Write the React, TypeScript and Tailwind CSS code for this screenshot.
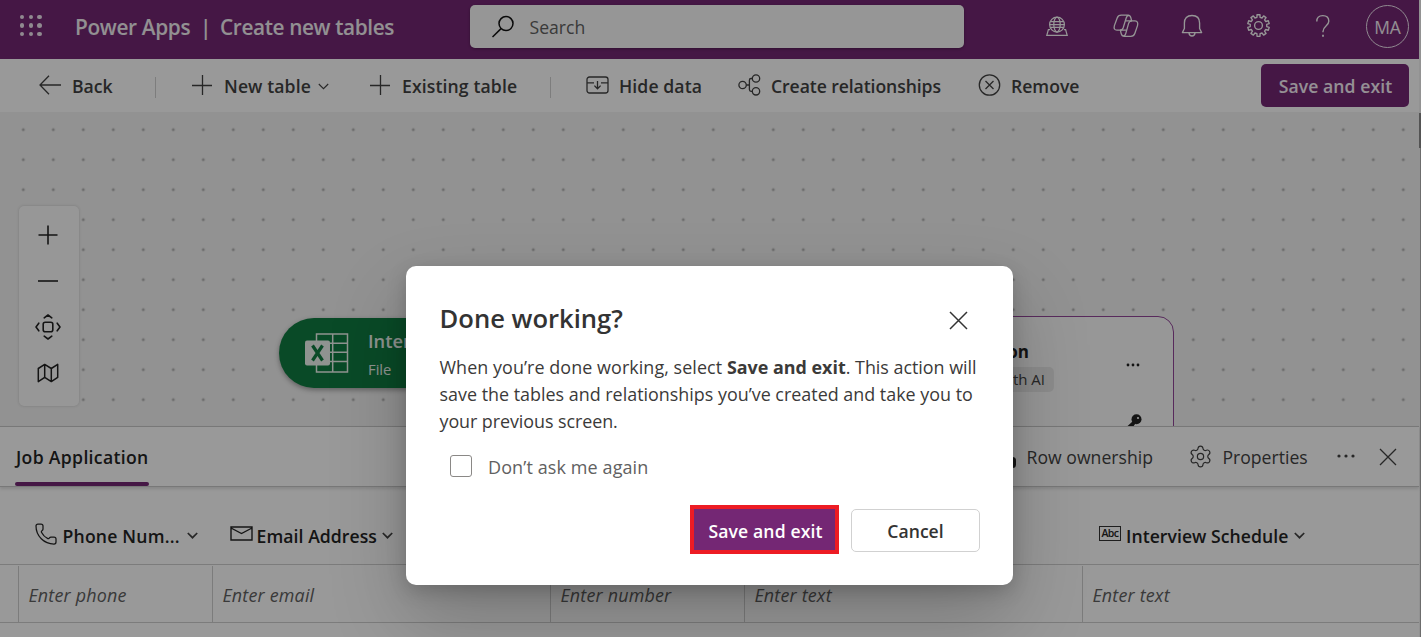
import React from "react";
import { Phone, Settings } from "lucide-react";

type IconProps = { className?: string; children: React.ReactNode; w: number; h: number; sw?: number };

function Icon({ w, h, sw = 1.3, className = "", children }: IconProps) {
  return (
    <svg
      width={w}
      height={h}
      viewBox={`0 0 ${w} ${h}`}
      fill="none"
      stroke="currentColor"
      strokeWidth={sw}
      className={`block shrink-0 ${className}`}
    >
      {children}
    </svg>
  );
}

function gearPath(c: number, outer: number, inner: number, teeth: number, offset: number) {
  const pts: string[] = [];
  const step = (Math.PI * 2) / teeth;
  for (let i = 0; i < teeth; i++) {
    const a = i * step + offset;
    const corners: [number, number][] = [
      [inner, -0.3],
      [outer, -0.22],
      [outer, 0.22],
      [inner, 0.3],
    ];
    corners.forEach(([r, f]) => {
      const t = a + f * step;
      pts.push(`${(c + r * Math.cos(t)).toFixed(2)} ${(c + r * Math.sin(t)).toFixed(2)}`);
    });
  }
  return `M${pts.join("L")}Z`;
}

const Plus = () => (
  <Icon w={20} h={20}>
    <path d="M0 10.5H20M10.5 0V20" />
  </Icon>
);

const Chevron = ({ sw = 1.5 }: { sw?: number }) => (
  <Icon w={11} h={7} sw={sw}>
    <path d="M.8 1L5.5 5.7L10.2 1" />
  </Icon>
);

const Divider = () => <div className="mt-[5px] h-[21px] w-px bg-[#d0d0d0]" />;

function Header() {
  return (
    <header className="flex h-[59px] shrink-0 items-start bg-[#742774] text-[#fafafa]">
      <div className="ml-[20px] mt-[15px] grid w-[22px] grid-cols-3 gap-x-[4.2px] gap-y-[4px]">
        {Array.from({ length: 9 }, (_, i) => (
          <span key={i} className="size-[4.4px] rounded-full bg-[#f0e6f0]" />
        ))}
      </div>
      <div className="ml-[33px] flex h-[56px] w-[395px] items-center whitespace-nowrap text-[20.8px] font-semibold text-[#f3f0f3]">
        <span className="w-[125px] tracking-[-0.33px]">Power Apps</span>
        <span className="w-[20px]">|</span>
        <span className="tracking-[-0.38px]">Create new tables</span>
      </div>
      <div className="mt-[5px] flex h-[43px] w-[494px] items-center rounded-[5px] bg-[#fafafa] shadow-[0_1px_3px_rgba(0,0,0,0.3)]">
        <Icon w={24} h={24} sw={1.5} className="ml-[21px] text-[#111]">
          <circle cx="15" cy="8.6" r="7" />
          <path d="M10 13.6L1.5 22" />
        </Icon>
        <span className="ml-[14.5px] pt-[2px] text-[17.6px] text-[#616161]">Search</span>
      </div>
      <div className="ml-[81px] flex h-[52px] items-center">
        <div className="w-[68px]">
          <Icon w={24} h={22} sw={1.25}>
            <circle cx="12" cy="9.6" r="7.4" />
            <ellipse cx="12" cy="9.6" rx="3.2" ry="7.4" />
            <path d="M5.5 6.6H18.5M5.5 12.4H18.5M4.6 9.6H19.4" />
            <path d="M5 14.5H3.4L1.8 20.3H22.2L20.6 14.5H19" />
          </Icon>
        </div>
        <div className="w-[68px]">
          <Icon w={26} h={24} sw={1.3}>
            <path d="M18.6 6.9L17.9 3.8Q17.2 1.2 14.6 1.2H8.2Q5.2 1.2 4.2 4L1.4 11.6Q.2 16 4 16.2H7Q9.4 16.2 10.2 13.8L13.2 4Q14 1.4 16.2 1.4" />
            <path d="M7.4 16.2L8.1 19.3Q8.8 22.3 11.4 22.3H17.8Q20.8 22.3 21.8 19.5L24.5 11.6Q25.6 7.2 22 6.9H19Q16.4 6.9 15.6 9.4L12.8 19.4Q12 22.1 9.8 22.1" />
            <path d="M12.4 6.9H19M7 16.2H13.6" />
          </Icon>
        </div>
        <div className="w-[66px]">
          <Icon w={22} h={24} sw={1.35}>
            <path d="M3.4 9Q3.4 1.5 11 1.5T18.6 9V14.5L20.6 18.6H1.4L3.4 14.5Z" strokeLinejoin="round" />
            <path d="M8 18.8Q8.4 22 11 22T14 18.8" />
          </Icon>
        </div>
        <div className="w-[68px]">
          <Icon w={24} h={24} sw={1.35}>
            <path d={gearPath(11.5, 10.9, 8.3, 10, Math.PI / 2)} strokeLinejoin="round" />
            <circle cx="11.5" cy="11.5" r="3.9" />
          </Icon>
        </div>
        <Icon w={16} h={24} sw={1.4}>
          <path d="M1.8 7.4Q1.8 1.6 7.8 1.6T13.8 7.2Q13.8 9.8 10.8 12.2Q8 14.5 8 17.6V18.2" />
          <path d="M8 20.8V22.8" strokeWidth="1.8" />
        </Icon>
        <div className="ml-[35px] mt-px flex size-[43px] items-center justify-center rounded-full border border-[#f0e6f0] pt-0.5 text-[17.5px] tracking-[-0.2px] text-[#f5eef5]">
          MA
        </div>
      </div>
    </header>
  );
}

function Toolbar() {
  return (
    <div className="flex h-[53px] shrink-0 items-center whitespace-nowrap bg-white pb-px pl-[39px] text-[17.6px] font-semibold text-[#424242] [&_span]:pt-[2px]">
      <div className="flex w-[116px] items-center">
        <div className="w-[33px]">
          <Icon w={23} h={20}>
            <path d="M1 10H22M10 .8L1 10L10 19.2" />
          </Icon>
        </div>
        <span>Back</span>
      </div>
      <Divider />
      <div className="ml-[36px] flex w-[178px] items-center">
        <div className="w-[32px]">
          <Plus />
        </div>
        <span className="w-[94px] tracking-[0.1px]">New table</span>
        <div className="mt-[4px]">
          <Chevron sw={1.1} />
        </div>
      </div>
      <div className="flex w-[180px] items-center">
        <div className="w-[32px]">
          <Plus />
        </div>
        <span className="tracking-[0.12px]">Existing table</span>
      </div>
      <Divider />
      <div className="ml-[35px] flex w-[152px] items-center">
        <div className="w-[33px]">
          <Icon w={23} h={18}>
            <rect x="1" y="1" width="21" height="16" rx="2.5" />
            <path d="M1 6.8H8M15 6.8H22M11.5 5V12.5M8.4 9.6L11.5 12.8L14.6 9.6" />
          </Icon>
        </div>
        <span className="tracking-[0.1px]">Hide data</span>
      </div>
      <div className="flex w-[240px] items-center">
        <div className="w-[33px]">
          <Icon w={23} h={22}>
            <circle cx="4.6" cy="11" r="3.7" />
            <circle cx="18" cy="4.5" r="3.7" />
            <circle cx="18" cy="17.3" r="3.7" />
            <path d="M8.3 11H11.4M14.3 4.5H13Q11.4 4.5 11.4 6.2V15.6Q11.4 17.3 13 17.3H14.3" />
          </Icon>
        </div>
        <span className="tracking-[-0.08px]">Create relationships</span>
      </div>
      <div className="flex w-[283px] items-center">
        <div className="w-[33px]">
          <Icon w={23} h={22}>
            <circle cx="11.5" cy="11" r="10.2" />
            <path d="M7.5 7L15.5 15M15.5 7L7.5 15" />
          </Icon>
        </div>
        <span>Remove</span>
      </div>
      <button className="flex h-[43px] w-[148px] items-center justify-center rounded-[5px] bg-[#742774] pl-px pt-[2px] font-semibold tracking-[0.08px] text-[#f8f0f8]">
        Save and exit
      </button>
    </div>
  );
}

function ZoomControls() {
  return (
    <div className="absolute left-[19px] top-[94px] flex h-[200px] w-[60px] flex-col items-center justify-center gap-[2px] rounded-[5px] bg-[#fcfcfc] pb-[4px] pr-[2px] text-[#222] shadow-[0_0_3px_rgba(0,0,0,0.16)]">
      <div className="flex size-[44px] items-center justify-center">
        <Icon w={20} h={20} sw={1.6}>
          <path d="M.5 10H19.5M10 .5V19.5" />
        </Icon>
      </div>
      <div className="flex size-[44px] items-center justify-center">
        <Icon w={20} h={20} sw={1.6}>
          <path d="M0 10H20" />
        </Icon>
      </div>
      <div className="flex size-[44px] items-center justify-center">
        <Icon w={26} h={26} sw={1.6}>
          <rect x="8.2" y="8.2" width="9.6" height="9.6" rx="2" />
          <path
            d="M9.2 3.8L13 1L16.8 3.8M9.2 22.2L13 25L16.8 22.2M3.8 9.2L1 13L3.8 16.8M22.2 9.2L25 13L22.2 16.8"
            strokeLinecap="round"
            strokeLinejoin="round"
          />
        </Icon>
      </div>
      <div className="flex size-[44px] items-center justify-center">
        <Icon w={22} h={20} sw={1.5}>
          <path d="M1.3 5.5L7.7 1.4L14.3 5.5L20.7 1.4V14.4L14.3 18.6L7.7 14.4L1.3 18.6ZM7.7 1.4V14.4M14.3 5.5V18.6" strokeLinejoin="round" />
        </Icon>
      </div>
    </div>
  );
}

function FileNode() {
  return (
    <div className="absolute left-[279px] top-[206px] flex h-[70px] w-[230px] items-center rounded-full bg-[#107c41] pl-[26px] text-[#eef5f0] shadow-[0_2px_5px_rgba(0,0,0,0.35)]">
      <Icon w={44} h={40} sw={1.5}>
        <path d="M11.5 8V1H42.5V39H11.5V32M27.7 1V39M11.5 10.2H42.5M24 19.2H42.5M11.5 28.6H42.5" />
        <rect x="0" y="7.5" width="25" height="25" rx="2" fill="#eef5f0" stroke="none" />
        <path d="M7.5 12.5L17.5 27.5M17.5 12.5L7.5 27.5" stroke="#107c41" strokeWidth="3.2" />
      </Icon>
      <div className="ml-[19px] flex flex-col whitespace-nowrap pt-[4px]">
        <span className="text-[18.3px] font-semibold leading-[28px]">Interview</span>
        <span className="text-[14.8px] leading-[28px]">File</span>
      </div>
    </div>
  );
}

function TableNode() {
  return (
    <div className="absolute left-[860px] top-[204px] h-[150px] w-[314px] rounded-[16px] border-[1.5px] border-[#93479a] bg-[#fcfcfc] text-[#222]">
      <div className="flex items-center pt-[20px]">
        <div className="flex w-[193px] flex-col items-end whitespace-nowrap">
          <span className="mr-[25px] text-[17px] font-bold leading-[30px]">ion</span>
          <span className="flex h-[25px] items-center rounded-[5px] bg-[#e9e9e9] px-[9px] text-[15px] text-[#424242]">
            with AI
          </span>
        </div>
        <div className="ml-[72px]">
          <Icon w={14} h={4}>
            <g fill="currentColor" stroke="none">
              <circle cx="2" cy="2" r="1.4" />
              <circle cx="7" cy="2" r="1.4" />
              <circle cx="12" cy="2" r="1.4" />
            </g>
          </Icon>
        </div>
      </div>
      <Icon w={15} h={15} className="ml-[266px] mt-[22px]">
        <path d="M6 7L-.5 13V15H4.5L8.5 9.5" fill="currentColor" stroke="none" />
        <circle cx="9.5" cy="5.3" r="5" fill="currentColor" stroke="none" />
        <circle cx="11" cy="4" r="1.1" fill="#fcfcfc" stroke="none" />
      </Icon>
    </div>
  );
}

function Canvas() {
  return (
    <main className="relative h-[314px] shrink-0 overflow-hidden bg-[#f3f3f3] bg-[radial-gradient(circle,#b4b4b4_1.1px,transparent_1.8px)] bg-[size:30px_30px] bg-[position:8.3px_2.7px]">
      <ZoomControls />
      <FileNode />
      <TableNode />
    </main>
  );
}

function PanelBar() {
  return (
    <div className="relative flex h-[61px] shrink-0 items-start whitespace-nowrap border-y border-[#c8c8c8] bg-white pl-[15px] text-[17.6px] text-[#424242] shadow-[0_2px_3px_rgba(0,0,0,0.12)]">
      <div className="flex h-[59px] w-[134px] flex-col justify-between font-semibold text-[#242424]">
        <span className="pl-px pt-[18px] leading-[24px] tracking-[0.33px]">Job Application</span>
        <span className="h-[4px] rounded-full bg-[#742774]" />
      </div>
      <div className="ml-[847px] flex h-[59px] items-center pt-px">
        <div className="w-[30.5px]">
          <Icon w={20} h={24}>
            <circle cx="10" cy="6" r="4.5" fill="currentColor" stroke="none" />
            <rect x="1" y="12" width="19" height="11" rx="3.5" fill="#222" stroke="none" />
          </Icon>
        </div>
        <span className="w-[161.5px] tracking-[0.04px]">Row ownership</span>
        <Settings size={25} strokeWidth={1.15} className="mb-0.5 shrink-0" />
        <span className="ml-[9.5px] w-[114.5px]">Properties</span>
        <Icon w={18} h={4} className="mb-0.5">
          <g fill="currentColor" stroke="none">
            <circle cx="2" cy="2" r="1.6" />
            <circle cx="9" cy="2" r="1.6" />
            <circle cx="16" cy="2" r="1.6" />
          </g>
        </Icon>
        <Icon w={18} h={18} className="mb-px ml-[24px]">
          <path d="M1 1L17 17M17 1L1 17" />
        </Icon>
      </div>
    </div>
  );
}

function ColumnHead({ icon, label, width }: { icon: React.ReactNode; label: string; width: string }) {
  return (
    <div className="flex items-center pl-[17px]">
      <div className="flex w-[27px] items-center">{icon}</div>
      <span className={`pt-[2px] ${width}`}>{label}</span>
      <span className="text-[#424242]">
        <Chevron sw={1.7} />
      </span>
    </div>
  );
}

function Grid() {
  return (
    <section className="flex flex-1 flex-col whitespace-nowrap bg-white text-[17.6px]">
      <div className="grid h-[78px] shrink-0 grid-cols-[18px_194px_338px_194px_338px_1fr] border-b border-[#cfcfcf] pt-[20px] font-semibold text-[#242424]">
        <span />
        <ColumnHead
          icon={<Phone size={24} strokeWidth={1.25} className="-ml-px mb-[3px] shrink-0" />}
          label="Phone Num..."
          width="w-[125px] pl-[0.5px] tracking-[0.2px]"
        />
        <ColumnHead
          icon={
            <Icon w={23} h={15} sw={1.4} className="mb-1 ml-px">
              <path d="M1 1H22V14H1ZM1 2L11.5 7.5L22 2" />
            </Icon>
          }
          label="Email Address"
          width="w-[126px] pl-[0.6px] tracking-[0.06px]"
        />
        <span />
        <span />
        <ColumnHead
          icon={
            <span className="mb-1 flex h-[15px] w-[22px] items-center justify-center border-[1.5px] border-[#333] text-[10.5px] tracking-[-0.5px]">
              Abc
            </span>
          }
          label="Interview Schedule"
          width="w-[168px] tracking-[0.05px]"
        />
      </div>
      <div className="grid h-[58px] shrink-0 grid-cols-[18px_194px_338px_194px_338px_1fr] border-b border-[#cfcfcf] text-[17.9px] italic tracking-[0.2px] text-[#616161]">
        <span />
        {["Enter phone", "Enter email", "Enter number", "Enter text", "Enter text"].map((t, i) => (
          <div key={i} className="mt-px flex items-center border-l border-[#cfcfcf] pl-[9.4px] pt-[3px]">
            {t}
          </div>
        ))}
      </div>
    </section>
  );
}

function Dialog() {
  return (
    <div
      role="dialog"
      className="h-[319px] w-[607px] rounded-[10px] bg-white px-[33px] pt-[36px] text-[#333] shadow-[0_34px_77px_rgba(0,0,0,0.22),0_6px_19px_rgba(0,0,0,0.18)]"
    >
      <div className="flex items-center justify-between pl-[0.5px] pr-[12px]">
        <h1 className="whitespace-nowrap text-[25.6px] font-semibold leading-[34px]">Done working?</h1>
        <Icon w={19} h={19} sw={1.5} className="mt-[3px]">
          <path d="M1 1L18 18M18 1L1 18" />
        </Icon>
      </div>
      <p className="mt-[18px] whitespace-nowrap pl-[0.5px] text-[17.92px] leading-[27px] text-[#3b3a39]">
        <span className="tracking-[0.07px]">When you’re done working, select </span>
        <b className="font-bold">Save and exit</b>
        <span className="tracking-[-0.02px]">. This action will</span>
        <br />
        save the tables and relationships you’ve created and take you to
        <br />
        <span className="tracking-[-0.07px]">your previous screen.</span>
      </p>
      <label className="ml-[11px] mt-[19px] flex h-[24px] items-center">
        <span className="size-[22px] rounded-[3px] border border-[#8a8886]" />
        <span className="ml-[16px] pt-[2px] text-[18px] tracking-[0.1px] text-[#616161]">Don’t ask me again</span>
      </label>
      <div className="mt-[27px] flex items-center justify-end text-[17.6px] font-semibold">
        <button className="flex h-[49px] w-[149px] items-center justify-center border-4 border-[#ed1c24] bg-[#742774] pl-[2px] pt-[3px] tracking-[0.12px] text-white">
          Save and exit
        </button>
        <button className="ml-[12px] mt-[2px] flex h-[43px] w-[129px] items-center justify-center rounded-[5px] border border-[#d1d1d1] bg-white pt-[2px]">
          Cancel
        </button>
      </div>
    </div>
  );
}

export default function App() {
  return (
    <div className="relative flex h-[637px] w-[1421px] overflow-hidden font-['Open_Sans','Noto_Sans',sans-serif]">
      <div className="flex w-[1419px] flex-col bg-white">
        <Header />
        <Toolbar />
        <Canvas />
        <PanelBar />
        <Grid />
      </div>
      <div className="flex w-[2px] flex-col bg-[#f3f3f3] pt-[113px]">
        <div className="h-[35px] bg-[#8a8a8a]" />
        <div className="flex-1 border-r border-[#b5b5b5]" />
      </div>
      <div className="absolute inset-0 flex items-start justify-center bg-black/40 pl-[406px] pr-[408px] pt-[266px]">
        <Dialog />
      </div>
    </div>
  );
}
